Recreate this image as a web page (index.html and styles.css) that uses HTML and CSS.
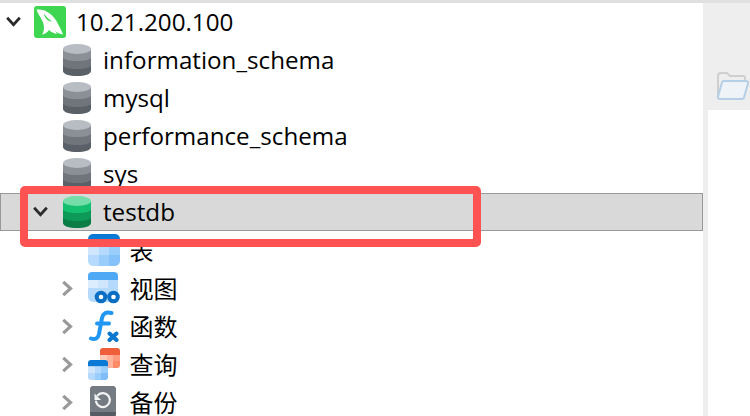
FILE: index.html
```html
<!DOCTYPE html>
<html lang="zh">
<head>
<meta charset="utf-8">
<title>10.21.200.100</title>
<link rel="stylesheet" href="styles.css">
</head>
<body>
<svg class="defs" width="0" height="0" aria-hidden="true">
  <defs>
    <symbol id="db" viewBox="0 0 32 32">
      <path class="db-c" d="M2 20v7c0 3 6 5 14 5s14-2 14-5v-7z"/>
      <path class="db-b" d="M2 13v8c0 2.500 6 4 14 4s14-1.500 14-4v-8z"/>
      <path class="db-a" d="M2 5v8c0 2.500 6 4 14 4s14-1.500 14-4V5z"/>
      <ellipse class="db-t" cx="16" cy="5" rx="14" ry="5"/>
    </symbol>
  </defs>
</svg>
<div class="app">
  <div class="tree">
    <div class="row">
      <svg class="chev chev-dark" viewBox="0 0 14 10"><path d="M1.500 1.500 7 7.500l5.500-6"/></svg>
      <svg class="icon" viewBox="0 0 32 32">
        <rect width="32" height="32" rx="3" fill="#3ed651"/>
        <path fill="#fff" d="M2.500 3.500c4-.5 9 .5 12.500 3.500 4 3 7 6.500 9 11 1.500 3 3.500 6 5 10.500-3-.5-6-1.500-8-3.500l2 3c-3-.5-6-2-8-4-2 2.500-4 4-7 4.500 2-3 2.500-6.500 1.500-10.500-1-4.500-5-8.500-7-14.500z"/>
        <path fill="#3ed651" d="M10 7.500c2 3 5 6 8 8-3 0-5-1.500-6-3-1-1.500-2-3-2-5z"/>
      </svg>
      <span class="label">10.21.200.100</span>
    </div>
    <div class="row lv1"><span class="slot"></span><svg class="icon db-gray"><use href="#db"/></svg><span class="label">information_schema</span></div>
    <div class="row lv1"><span class="slot"></span><svg class="icon db-gray"><use href="#db"/></svg><span class="label">mysql</span></div>
    <div class="row lv1"><span class="slot"></span><svg class="icon db-gray"><use href="#db"/></svg><span class="label">performance_schema</span></div>
    <div class="row lv1"><span class="slot"></span><svg class="icon db-gray"><use href="#db"/></svg><span class="label">sys</span></div>
    <div class="row lv1 selected">
      <svg class="chev chev-dark" viewBox="0 0 14 10"><path d="M1.500 1.500 7 7.500l5.500-6"/></svg>
      <svg class="icon db-green"><use href="#db"/></svg><span class="label">testdb</span>
    </div>
    <div class="row lv2">
      <span class="slot"></span>
      <svg class="icon" viewBox="0 0 32 32">
        <path fill="#0a7ad6" d="M0 11V5a5 5 0 0 1 5-5h22a5 5 0 0 1 5 5v6z"/>
        <path fill="#cfe6fd" d="M0 11h11v10H0z"/>
        <path fill="#b5dafd" d="M11 11h10v10H11z"/>
        <path fill="#99cdfc" d="M21 11h11v10H21z"/>
        <path fill="#b5dafd" d="M0 21h11v11H5a5 5 0 0 1-5-5z"/>
        <path fill="#99cdfc" d="M11 21h10v11H11z"/>
        <path fill="#85c2fa" d="M21 21h11v6a5 5 0 0 1-5 5h-6z"/>
      </svg>
      <span class="label cjk">表</span>
    </div>
    <div class="row lv2">
      <svg class="chev chev-gray" viewBox="0 0 10 14"><path d="M1.500 1.500 7.500 7l-6 5.500"/></svg>
      <svg class="icon" viewBox="0 0 32 32">
        <path fill="#4fa9f5" d="M0 8V4a4 4 0 0 1 4-4h22a4 4 0 0 1 4 4v4z"/>
        <path fill="#dcedfe" d="M0 8h10v8H0z"/>
        <path fill="#cfe6fd" d="M10 8h10v8H10z"/>
        <path fill="#b5dafd" d="M20 8h10v8H20z"/>
        <path fill="#b5dafd" d="M0 16h30v9a5 5 0 0 1-5 5H5a5 5 0 0 1-5-5z"/>
        <circle cx="13" cy="25" r="4.300" fill="#fff" stroke="#0a6fc4" stroke-width="4"/>
        <circle cx="25.500" cy="25" r="4.300" fill="#fff" stroke="#0a6fc4" stroke-width="4"/>
      </svg>
      <span class="label cjk">视图</span>
    </div>
    <div class="row lv2">
      <svg class="chev chev-gray" viewBox="0 0 10 14"><path d="M1.500 1.500 7.500 7l-6 5.500"/></svg>
      <svg class="icon" viewBox="0 0 32 32">
        <path fill="none" stroke="#2196f3" stroke-width="4" stroke-linecap="round" d="M23.500 3C18 1.500 15 3.500 14 8l-3 16c-.9 4.500-4 6-8 4.500"/>
        <path fill="none" stroke="#2196f3" stroke-width="4" stroke-linecap="round" d="M9 13.500h12"/>
        <path fill="none" stroke="#0b78d0" stroke-width="4" stroke-linecap="round" d="M21.500 23.500l7 6.500M28.500 23.500l-7 6.500"/>
      </svg>
      <span class="label cjk">函数</span>
    </div>
    <div class="row lv2">
      <svg class="chev chev-gray" viewBox="0 0 10 14"><path d="M1.500 1.500 7.500 7l-6 5.500"/></svg>
      <svg class="icon" viewBox="0 0 32 32">
        <path fill="#ef5f3c" d="M12 7V3a3 3 0 0 1 3-3h14a3 3 0 0 1 3 3v4z"/>
        <path fill="#ffc9b8" d="M12 7h7v6h-7z"/>
        <path fill="#ffb39c" d="M19 7h6v6h-6z"/>
        <path fill="#ff9c80" d="M25 7h7v6h-7z"/>
        <path fill="#ffb39c" d="M19 13h6v7h-6z"/>
        <path fill="#ff8a66" d="M25 13h7v4a3 3 0 0 1-3 3h-4z"/>
        <path fill="#0a7ad6" d="M0 18.500V15a3 3 0 0 1 3-3h14a3 3 0 0 1 3 3v3.500z"/>
        <path fill="#cfe6fd" d="M0 18.500h7V25H0z"/>
        <path fill="#b5dafd" d="M7 18.500h6V25H7z"/>
        <path fill="#99cdfc" d="M13 18.500h7V25h-7z"/>
        <path fill="#b5dafd" d="M0 25h7v7H3a3 3 0 0 1-3-3z"/>
        <path fill="#99cdfc" d="M7 25h6v7H7z"/>
        <path fill="#7ebdf8" d="M13 25h7v4a3 3 0 0 1-3 3h-4z"/>
      </svg>
      <span class="label cjk">查询</span>
    </div>
    <div class="row lv2">
      <svg class="chev chev-gray" viewBox="0 0 10 14"><path d="M1.500 1.500 7.500 7l-6 5.500"/></svg>
      <svg class="icon" viewBox="0 0 32 32">
        <rect x="2" y="0" width="26" height="32" rx="4" fill="#565c63"/>
        <path fill="#757b82" d="M2 4a4 4 0 0 1 4-4h18a4 4 0 0 1 4 4v22H2z"/>
        <path fill="none" stroke="#f2f3f4" stroke-width="2.200" stroke-linecap="round" d="M9.800 9.200A7 7 0 1 1 8 15.500"/>
        <path fill="#f2f3f4" d="M6.500 7.500v6.500H13z"/>
      </svg>
      <span class="label cjk">备份</span>
    </div>
  </div>
  <aside class="side">
    <svg class="folder" viewBox="0 0 32 28">
      <path fill="none" stroke="#cfcfcf" stroke-width="2" d="M1 24V4a3 3 0 0 1 3-3h6l3 3h13a2 2 0 0 1 2 2v2"/>
      <path fill="#eef3f8" stroke="#b4cfe6" stroke-width="2" d="M7 9h22a2 2 0 0 1 2 2.500l-4 14a2.500 2.500 0 0 1-2.500 1.500H3a2 2 0 0 1-2-2.500L5 10.500A2 2 0 0 1 7 9z"/>
    </svg>
    <div class="side-body"></div>
  </aside>
</div>
<div class="annotation"></div>
</body>
</html>
```
FILE: styles.css
```css
* { box-sizing: border-box; }

html, body {
  margin: 0;
  height: 416px;
  overflow: hidden;
  background: #fff;
}

.defs { position: absolute; }

.app {
  display: flex;
  height: 416px;
  border-top: 3px solid #e0e0e0;
  font-family: "Open Sans", "Noto Sans CJK SC", sans-serif;
  font-size: 24.2px;
  color: #000;
}

.tree {
  width: 703px;
  flex: none;
}

.row {
  display: flex;
  align-items: center;
  height: 38px;
  white-space: nowrap;
}

.lv1 { padding-left: 27px; }
.lv2 { padding-left: 54px; }

.selected {
  background: #d9d9d9;
  border: 1px solid #999;
  padding-left: 26px;
}

.slot,
.chev {
  width: 27px;
  flex: none;
}

.chev {
  fill: none;
}

.chev-dark {
  height: 11.500px;
  stroke: #2b2b2b;
  stroke-width: 2.400;
}

.chev-gray {
  height: 17px;
  stroke: #999;
  stroke-width: 2.600;
}

.icon {
  width: 32px;
  height: 32px;
  margin-left: 7px;
  flex: none;
}

.label {
  margin-left: 10px;
  line-height: 28px;
}

.cjk {
  margin-left: 9.500px;
  font-size: 24px;
  font-family: "Noto Sans CJK SC", sans-serif;
}

.db-gray { --t: #b8bcc3; --a: #8b9097; --b: #70757c; --c: #5a6067; }
.db-green { --t: #74dda8; --a: #14c070; --b: #0d9a58; --c: #0a7d47; }
.db-t { fill: var(--t); }
.db-a { fill: var(--a); }
.db-b { fill: var(--b); }
.db-c { fill: var(--c); }

.side {
  flex: 1;
  display: flex;
  flex-direction: column;
  background: #eee;
  padding-left: 5px;
}

.folder {
  width: 32px;
  height: 28px;
  margin: 69px 0 10px 9px;
  flex: none;
}

.side-body {
  flex: 1;
  background: #fff;
}

.annotation {
  position: absolute;
  left: 20px;
  top: 186px;
  width: 461px;
  height: 61px;
  border: 8px solid #ff5252;
  border-radius: 5px;
}
```
